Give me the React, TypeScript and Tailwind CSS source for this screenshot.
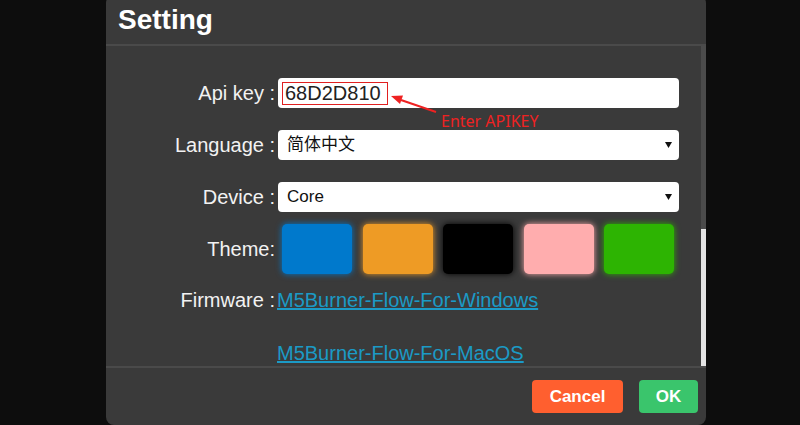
export default function App() {
  const swatches = ["#0079cc", "#ee9b25", "#000000", "#ffadae", "#2db402"];

  return (
    <div className="relative flex h-[425px] w-[800px] overflow-hidden bg-[#0d0d0d] font-['Liberation_Sans','Noto_Sans_CJK_SC',sans-serif]">
      <div className="ml-[106px] mt-[-5px] flex h-[430px] w-[600px] flex-col overflow-hidden rounded-lg bg-[#3a3a3a]">
        {/* header */}
        <div className="h-[51px] shrink-0 border-b-2 border-[#4a4a4a] pl-3 pt-[9px]">
          <h2 className="text-[28px] font-bold leading-[32px] text-white">Setting</h2>
        </div>

        {/* body */}
        <div className="flex h-[320px] shrink-0">
          <div className="flex-1 overflow-hidden pt-[32px] text-[20px] text-[#f2f2f2]">
            <div className="flex items-center">
              <div className="w-[169px] text-right">Api key :</div>
              <div className="ml-[3px] flex h-[30px] w-[401px] items-center rounded-[4px] bg-white pl-[4px]">
                <span className="border border-[#e02020] pl-[2px] pr-[6px] leading-[21px] text-[#222]">68D2D810</span>
              </div>
            </div>

            <div className="mt-[22px] flex items-center">
              <div className="w-[169px] text-right">Language :</div>
              <Select value="简体中文" />
            </div>

            <div className="mt-[22px] flex items-center">
              <div className="w-[169px] text-right">Device :</div>
              <Select value="Core" />
            </div>

            <div className="mt-[12px] flex items-center">
              <div className="w-[169px] text-right">Theme:</div>
              <div className="ml-[7px] flex gap-[10.5px]">
                {swatches.map((c) => (
                  <div
                    key={c}
                    className="h-[50px] w-[70px] rounded-[5px]"
                    style={{ backgroundColor: c, boxShadow: `0 0 6px ${c}` }}
                  />
                ))}
              </div>
            </div>

            <div className="mt-[14px] flex items-start leading-[24px]">
              <div className="w-[169px] text-right">Firmware :</div>
              <div className="ml-[2px] flex flex-col gap-[29px]">
                <a className="text-[#1b9ac6] underline">M5Burner-Flow-For-Windows</a>
                <a className="text-[#1b9ac6] underline">M5Burner-Flow-For-MacOS</a>
              </div>
            </div>
          </div>

          {/* scrollbar */}
          <div className="flex w-[5px] flex-col">
            <div className="h-[183px] bg-[#4b4b4b]" />
            <div className="flex-1 bg-[#e4e4e4]" />
          </div>
        </div>

        {/* footer */}
        <div className="flex flex-1 justify-end gap-4 border-t-2 border-[#4a4a4a] pr-2 pt-[12px]">
          <button className="h-[33px] w-[91px] rounded-[4px] bg-[#ff5f2f] text-[17px] font-bold text-white">Cancel</button>
          <button className="h-[33px] w-[59px] rounded-[4px] bg-[#3ac56c] text-[17px] font-bold text-white">OK</button>
        </div>
      </div>

      {/* annotation */}
      <svg className="pointer-events-none absolute left-0 top-0" width="800" height="425">
        <line x1="401" y1="100" x2="436" y2="112" stroke="#ee2222" strokeWidth="2" />
        <polygon points="391,96 403,95.5 400,104" fill="#ee2222" />
      </svg>
      <div className="absolute left-[441px] top-[110px] font-['Noto_Sans',sans-serif] text-[16px] leading-[22px] text-[#ee2222]">
        Enter APIKEY
      </div>
    </div>
  );
}

function Select({ value }: { value: string }) {
  return (
    <div className="ml-[3px] flex h-[30px] w-[401px] items-center justify-between rounded-[4px] bg-white pl-[9px] pr-[7px]">
      <span className="text-[17px] text-[#111]">{value}</span>
      <svg width="7" height="6" viewBox="0 0 7 6">
        <polygon points="0,0 7,0 3.5,6" fill="#111" />
      </svg>
    </div>
  );
}
